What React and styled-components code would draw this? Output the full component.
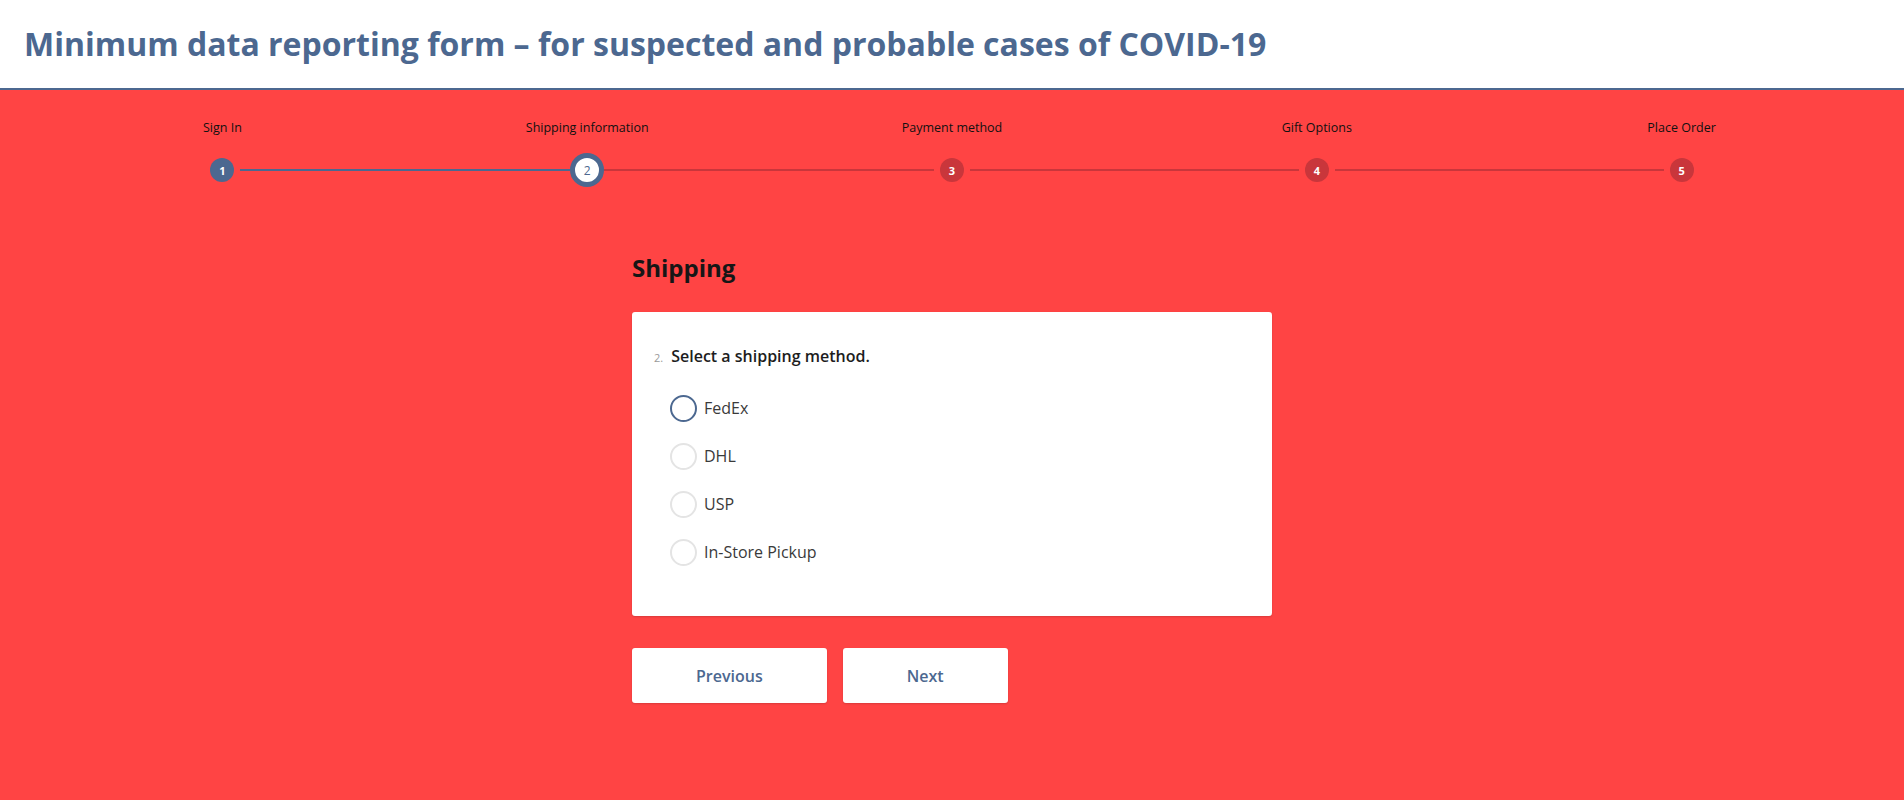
import styled, { createGlobalStyle } from "styled-components";

const BLUE = "#4c6890";
const RED = "#ff4444";
const DARK_RED = "#c9363b";

const GlobalStyle = createGlobalStyle`
  html, body {
    margin: 0;
    padding: 0;
    background: ${RED};
    font-family: "Open Sans", "Liberation Sans", sans-serif;
  }
  * {
    box-sizing: border-box;
  }
`;

const steps = ["Sign In", "Shipping information", "Payment method", "Gift Options", "Place Order"];
const current = 2;
const options = ["FedEx", "DHL", "USP", "In-Store Pickup"];

const App = () => {
  return (
    <Page>
      <GlobalStyle />
      <Header>
        <Title>Minimum data reporting form – for suspected and probable cases of COVID-19</Title>
      </Header>
      <Progress>
        {steps.map((label, i) => {
          const n = i + 1;
          return (
            <Step key={label}>
              <StepLabel>{label}</StepLabel>
              <StepRow>
                <Segment $hidden={n === 1} $done={n <= current} />
                <Dot $state={n < current ? "done" : n === current ? "current" : "todo"}>{n}</Dot>
                <Segment $hidden={n === steps.length} $done={n + 1 <= current} />
              </StepRow>
            </Step>
          );
        })}
      </Progress>
      <Main>
        <PageTitle>Shipping</PageTitle>
        <Card>
          <Question>
            <Num>2.</Num>
            <span>Select a shipping method.</span>
          </Question>
          <Options>
            {options.map((o, i) => (
              <Option key={o}>
                <Radio $active={i === 0} />
                <span>{o}</span>
              </Option>
            ))}
          </Options>
        </Card>
        <Buttons>
          <Button>Previous</Button>
          <Button>Next</Button>
        </Buttons>
      </Main>
    </Page>
  );
};

const Page = styled.div`
  min-height: 800px;
  background: ${RED};
`;

const Header = styled.header`
  height: 90px;
  background: #fff;
  border-bottom: 2px solid ${BLUE};
  display: flex;
  align-items: center;
  padding: 0 0 2px 24px;
`;

const Title = styled.h1`
  margin: 0;
  font-size: 32px;
  font-weight: 700;
  color: ${BLUE};
`;

const Progress = styled.ul`
  list-style: none;
  margin: 0;
  padding: 30px 40px 0;
  display: grid;
  grid-template-columns: repeat(5, 1fr);
`;

const Step = styled.li`
  display: flex;
  flex-direction: column;
  align-items: stretch;
`;

const StepLabel = styled.div`
  text-align: center;
  font-size: 12.5px;
  line-height: 16px;
  color: #111;
  margin-bottom: 17px;
`;

const StepRow = styled.div`
  display: flex;
  align-items: center;
  height: 34px;
`;

const Segment = styled.div`
  flex: 1;
  height: 2px;
  background: ${(p) => (p.$hidden ? "transparent" : p.$done ? BLUE : DARK_RED)};
`;

const Dot = styled.div`
  flex: none;
  display: flex;
  align-items: center;
  justify-content: center;
  border-radius: 50%;
  font-size: ${(p) => (p.$state === "current" ? "12px" : "11px")};
  font-weight: ${(p) => (p.$state === "current" ? 400 : 700)};
  width: ${(p) => (p.$state === "current" ? "34px" : "24px")};
  height: ${(p) => (p.$state === "current" ? "34px" : "24px")};
  margin: ${(p) => (p.$state === "current" ? "0" : "0 6px")};
  border: ${(p) => (p.$state === "current" ? `5px solid ${BLUE}` : "none")};
  background: ${(p) => (p.$state === "current" ? "#fff" : p.$state === "done" ? BLUE : DARK_RED)};
  color: ${(p) => (p.$state === "current" ? BLUE : "#fff")};
`;

const Main = styled.main`
  width: 640px;
  margin: 64px auto 0;
`;

const PageTitle = styled.h2`
  margin: 0 0 28px;
  font-size: 24px;
  font-weight: 700;
  color: #161616;
`;

const Card = styled.div`
  background: #fff;
  border-radius: 3px;
  box-shadow: 0 1px 2px rgba(0, 0, 0, 0.15);
  padding: 33px 22px 40px;
`;

const Question = styled.div`
  display: flex;
  align-items: baseline;
  font-size: 16px;
  font-weight: 600;
  color: #1d1d1d;
`;

const Num = styled.span`
  font-size: 11px;
  font-weight: 400;
  color: #9a9a9a;
  margin-right: 8px;
`;

const Options = styled.div`
  margin-top: 17px;
  padding-left: 16px;
  display: flex;
  flex-direction: column;
`;

const Option = styled.label`
  display: flex;
  align-items: center;
  height: 48px;
  gap: 7px;
  font-size: 16px;
  color: #3a3a3a;
`;

const Radio = styled.span`
  width: 27px;
  height: 27px;
  border-radius: 50%;
  background: #fff;
  border: 2px solid ${(p) => (p.$active ? BLUE : "#e4e4e4")};
`;

const Buttons = styled.div`
  display: flex;
  gap: 16px;
  margin-top: 32px;
`;

const Button = styled.button`
  height: 55px;
  padding: 0 64px;
  border: none;
  border-radius: 3px;
  background: #fff;
  box-shadow: 0 1px 2px rgba(0, 0, 0, 0.15);
  font-family: "Open Sans", "Liberation Sans", sans-serif;
  font-size: 16px;
  font-weight: 600;
  color: ${BLUE};
`;

export default App;
